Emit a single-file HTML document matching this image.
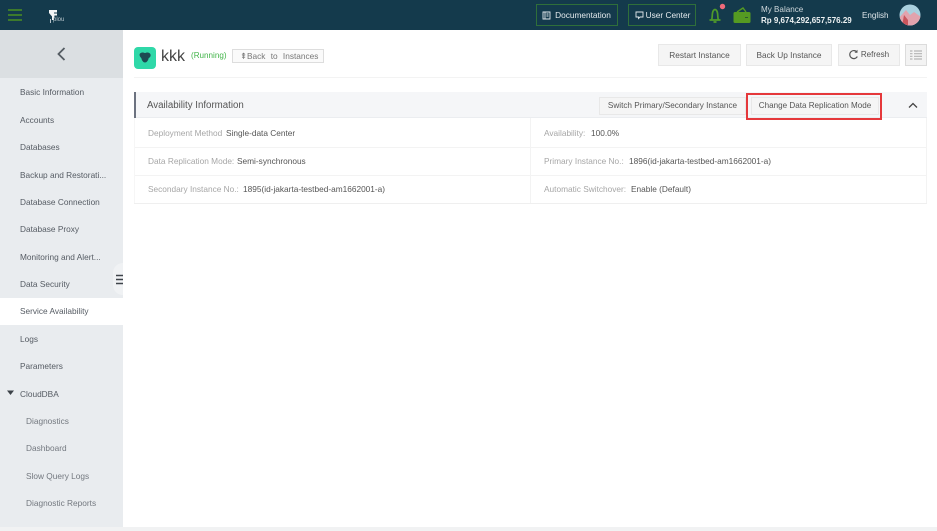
<!DOCTYPE html>
<html><head><meta charset="utf-8"><style>
html,body{margin:0;padding:0;width:937px;height:531px;overflow:hidden;background:#fff}
#r{position:relative;width:937px;height:531px;overflow:hidden;font-family:"Liberation Sans",sans-serif;font-size:8.3px;color:#555;filter:blur(.35px)}
#r div,#r svg{position:absolute}
.t{white-space:nowrap;line-height:12px}
.n{left:20px;color:#555b63}
.s{left:26px;color:#73787f}
.l{color:#a6a6a6}
.v{color:#555}
.b{background:#f5f5f5;border:1px solid #e8e8e8;box-sizing:border-box;text-align:center;color:#555;line-height:20px;white-space:nowrap}
.g{border:1px solid #2f6f3a;box-sizing:border-box;color:#e4eaed;text-align:center;white-space:nowrap;line-height:20px}
.hl{height:1px;background:#f3f3f3}
</style></head><body><div id="r">
<div style="left:0;top:0;width:937px;height:30px;background:#143a4c"></div>
<div style="left:8px;top:9px;width:14px;height:2px;background:#3d7a2c"></div>
<div style="left:8px;top:14px;width:14px;height:2px;background:#3d7a2c"></div>
<div style="left:8px;top:19px;width:14px;height:2px;background:#3d7a2c"></div>
<svg style="left:48px;top:9px" width="20" height="16" viewBox="0 0 20 16"><path d="M1 1h8v2.500H6v1h3v2H6.500L6 11H4V7.500L1 4z" fill="#f2f4f5"/><path d="M2.500 10v4" stroke="#dfe6ea" stroke-width=".8"/></svg>
<div class="t" style="left:53px;top:14px;font-size:6px;color:#b9c6cc">plou</div>

<div class="g" style="left:536px;top:4px;width:82px;height:22px;padding-left:12px">Documentation</div>
<svg style="left:542px;top:11px" width="9" height="9" viewBox="0 0 9 9"><path d="M1 1h7v7H1zM3 1v7M4.500 3h2M4.500 5h2" fill="none" stroke="#dfe6ea" stroke-width=".9"/></svg>
<div class="g" style="left:628px;top:4px;width:68px;height:22px;padding-left:12px">User Center</div>
<svg style="left:635px;top:11px" width="9" height="9" viewBox="0 0 9 9"><path d="M1 1h7v5H5L3.500 7.500V6H1z" fill="none" stroke="#dfe6ea" stroke-width=".9"/></svg>
<svg style="left:708px;top:3px" width="18" height="21" viewBox="0 0 18 21"><path d="M1.500 17h11M3.500 17c1-2 .5-4 1-7s2-3.500 2.500-3.500 2 .5 2.500 3.500 0 5 1 7M5.500 19h3" fill="none" stroke="#4f9a2a" stroke-width="1.700"/><circle cx="14.500" cy="3.500" r="2.700" fill="#ef6a7a"/></svg>
<svg style="left:733px;top:6px" width="18" height="18" viewBox="0 0 18 18"><rect x="0.500" y="6" width="17" height="11" rx="1.500" fill="#559a22"/><path d="M4 6l6-4 3 4" fill="none" stroke="#559a22" stroke-width="1.400"/><rect x="12" y="11" width="3" height="1" fill="#2c5a30"/></svg>
<div class="t" style="left:761px;top:4px;color:#cfd8dc;font-size:8.100px">My Balance</div>
<div class="t" style="left:761px;top:15px;color:#eef2f3;font-weight:bold;font-size:8px">Rp 9,674,292,657,576.29</div>
<div class="t" style="left:862px;top:10px;color:#dfe6ea;font-size:8.100px">English</div>
<svg style="left:899px;top:4px" width="22" height="22" viewBox="0 0 22 22"><defs><clipPath id="c"><circle cx="11" cy="11" r="10.500"/></clipPath></defs><g clip-path="url(#c)"><rect width="22" height="22" fill="#a9d0de"/><path d="M0 14L7 6l4 5 4-3 7 5v9H0z" fill="#e2a3ad"/><path d="M3 22l2-11 4 5v6z" fill="#c9555c"/></g></svg>

<div style="left:0;top:30px;width:123px;height:497px;background:#e9ecef"></div>
<div style="left:0;top:30px;width:123px;height:48px;background:#dbdfe2"></div>
<svg style="left:55px;top:46px" width="13" height="16" viewBox="0 0 13 16"><path d="M9.500 2L3.500 8l6 6" fill="none" stroke="#555c63" stroke-width="1.800"/></svg>
<div style="left:0;top:298px;width:123px;height:27px;background:#fff"></div>
<div class="t n" style="top:86px">Basic Information</div>
<div class="t n" style="top:114px">Accounts</div>
<div class="t n" style="top:141px">Databases</div>
<div class="t n" style="top:169px">Backup and Restorati...</div>
<div class="t n" style="top:196px">Database Connection</div>
<div class="t n" style="top:223px">Database Proxy</div>
<div class="t n" style="top:251px">Monitoring and Alert...</div>
<div class="t n" style="top:278px">Data Security</div>
<div class="t n" style="top:305px">Service Availability</div>
<div class="t n" style="top:333px">Logs</div>
<div class="t n" style="top:360px">Parameters</div>
<svg style="left:7px;top:390px" width="8" height="6" viewBox="0 0 8 6"><path d="M0 .5h7L3.500 5z" fill="#3c4248"/></svg>
<div class="t n" style="top:388px">CloudDBA</div>
<div class="t s" style="top:415px">Diagnostics</div>
<div class="t s" style="top:442px">Dashboard</div>
<div class="t s" style="top:470px">Slow Query Logs</div>
<div class="t s" style="top:497px">Diagnostic Reports</div>
<div style="left:113px;top:263px;width:18px;height:32px;border-radius:10px 0 0 10px;background:#f0f2f4"></div>
<svg style="left:116px;top:274px" width="8" height="11" viewBox="0 0 8 11"><path d="M0 1.500h7.500M0 5.500h7.500M0 9.500h7.500" stroke="#3e444a" stroke-width="1.500"/></svg>
<div style="left:123px;top:30px;width:814px;height:497px;background:#fff"></div>
<div style="left:0;top:527px;width:937px;height:4px;background:#f1f2f3"></div>

<svg style="left:134px;top:47px" width="22" height="22" viewBox="0 0 22 22"><rect width="22" height="22" rx="4" fill="#2fd8a8"/><path d="M6 6.500c2-1.500 3-1 5-.5 2-.5 3-1 5 .5 1.300 1.500 .5 4-1.300 4.500-.5 2.800-2.200 4.500-3.700 4.500s-3.200-1.700-3.700-4.500C6.500 10.500 4.700 8 6 6.500z" fill="#1d4a52"/></svg>
<div class="t" style="left:161px;top:47px;font-size:16px;line-height:20px;color:#444">kkk</div>
<div class="t" style="left:191px;top:50px;color:#43b54a;font-size:8.100px">(Running)</div>
<div class="t" style="left:232px;top:49px;width:92px;height:14px;box-sizing:border-box;border:1px solid #ddd;background:#fafafa;color:#777;line-height:12px;padding-left:7px;word-spacing:3px">⇞Back to Instances</div>
<div class="b" style="left:658px;top:44px;width:83px;height:22px">Restart Instance</div>
<div class="b" style="left:746px;top:44px;width:86px;height:22px">Back Up Instance</div>
<div class="b" style="left:838px;top:44px;width:62px;height:22px;padding-left:12px;font-size:8.100px">Refresh</div>
<svg style="left:848px;top:49px" width="11" height="11" viewBox="0 0 11 11"><path d="M9 3.200A4 4 0 1 0 9.300 7.500" fill="none" stroke="#555" stroke-width="1.200"/><path d="M9.500 .8v3h-3z" fill="#555"/></svg>
<div style="left:905px;top:44px;width:22px;height:22px;box-sizing:border-box;border:1px solid #dcdcdc;background:#f3f3f3"></div>
<svg style="left:910px;top:50px" width="12" height="10" viewBox="0 0 12 10"><path d="M0 1h2.500M4 1h8M0 3.700h2.500M4 3.700h8M0 6.300h2.500M4 6.300h8M0 9h2.500M4 9h8" stroke="#b5b5b5" stroke-width="1.200"/></svg>
<div class="hl" style="left:134px;top:77px;width:793px"></div>

<div style="left:134px;top:92px;width:793px;height:26px;background:#f5f6f8;border-bottom:1px solid #ebedf0;box-sizing:border-box"></div>
<div style="left:134px;top:92px;width:2px;height:26px;background:#6c7280"></div>
<div class="t" style="left:147px;top:100px;font-size:9.700px;color:#555">Availability Information</div>
<div class="b" style="left:599px;top:97px;width:147px;height:18px;line-height:16px;font-size:8.200px">Switch Primary/Secondary Instance</div>
<div class="b" style="left:751px;top:97px;width:128px;height:18px;line-height:16px;font-size:8.100px">Change Data Replication Mode</div>
<div style="left:746px;top:93px;width:136px;height:2px;background:#e5383b"></div>
<div style="left:746px;top:118px;width:136px;height:2px;background:#e5383b"></div>
<div style="left:746px;top:93px;width:2px;height:27px;background:#e5383b"></div>
<div style="left:880px;top:93px;width:2px;height:27px;background:#e5383b"></div>
<svg style="left:908px;top:102px" width="10" height="7" viewBox="0 0 10 7"><path d="M1 5.500l4-4 4 4" fill="none" stroke="#444" stroke-width="1.300"/></svg>

<div class="hl" style="left:134px;top:147px;width:793px"></div>
<div class="hl" style="left:134px;top:175px;width:793px"></div>
<div class="hl" style="left:134px;top:203px;width:793px;background:#efefef"></div>
<div style="left:134px;top:118px;width:1px;height:85px;background:#f6f6f6"></div>
<div style="left:530px;top:118px;width:1px;height:85px;background:#f3f3f3"></div>
<div style="left:926px;top:118px;width:1px;height:85px;background:#f3f3f3"></div>

<div class="t l" style="left:148px;top:127px">Deployment Method</div>
<div class="t v" style="left:226px;top:127px">Single-data Center</div>
<div class="t l" style="left:148px;top:155px">Data Replication Mode:</div>
<div class="t v" style="left:237px;top:155px">Semi-synchronous</div>
<div class="t l" style="left:148px;top:183px">Secondary Instance No.:</div>
<div class="t v" style="left:243px;top:183px">1895(id-jakarta-testbed-am1662001-a)</div>
<div class="t l" style="left:544px;top:127px">Availability:</div>
<div class="t v" style="left:591px;top:127px">100.0%</div>
<div class="t l" style="left:544px;top:155px">Primary Instance No.:</div>
<div class="t v" style="left:629px;top:155px">1896(id-jakarta-testbed-am1662001-a)</div>
<div class="t l" style="left:544px;top:183px">Automatic Switchover:</div>
<div class="t v" style="left:631px;top:183px">Enable (Default)</div>
</div></body></html>
